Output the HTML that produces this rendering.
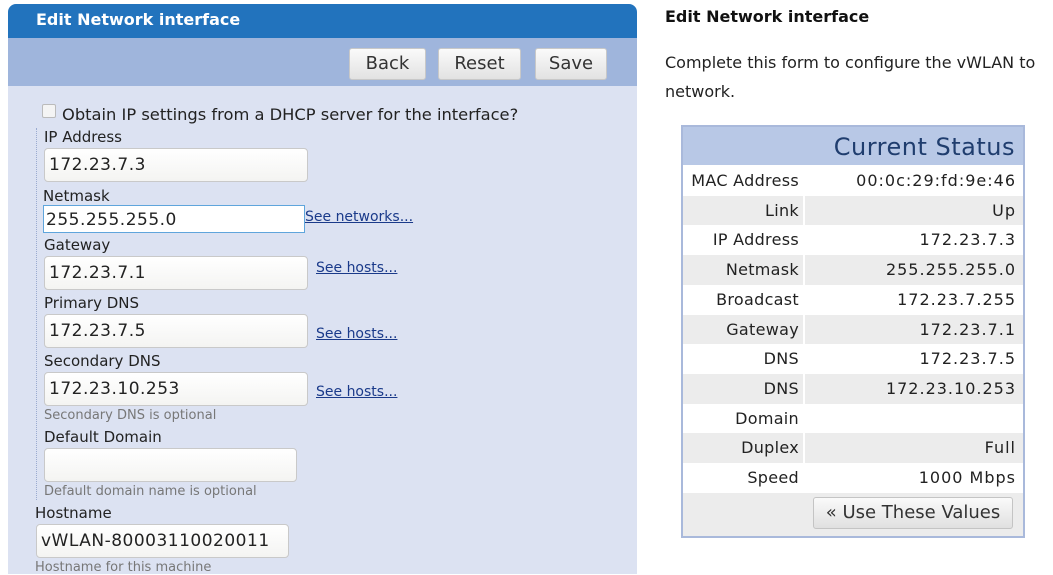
<!DOCTYPE html>
<html><head><meta charset="utf-8"><style>
*{box-sizing:border-box}
body{margin:0;width:1053px;height:574px;overflow:hidden;background:#fff;font-family:"DejaVu Sans","Liberation Sans",sans-serif;color:#222;position:relative}
.a{position:absolute;white-space:nowrap}
#hd{left:8px;top:4px;width:629px;height:34px;background:#2273bd;border-radius:8px 8px 0 0;color:#fff;font-weight:bold;font-size:16px;padding:6px 0 0 28px}
#tb{left:8px;top:38px;width:629px;height:48px;background:#9fb5dc}
#bd{left:8px;top:86px;width:629px;height:488px;background:#dce2f2}
.btn{position:absolute;top:48px;height:32px;background:linear-gradient(#fafafa,#e2e2e2);border:1px solid #c8c8c8;border-radius:3px;font-size:18px;color:#333;text-align:center;line-height:30px}
.lb{font-size:15px;color:#222}
.in{position:absolute;background:linear-gradient(#fff,#f4f4f2);border:1px solid #c9c9c9;border-radius:4px;font-size:17px;letter-spacing:0.5px;padding-left:4px;line-height:32px;color:#222}
.lk{font-size:14px;color:#1a3a8a;text-decoration:underline}
.ht{font-size:13px;color:#777}
#tbl{left:681px;top:125px;width:344px;height:413px;border:2px solid #a9b9db;background:#fff}
.r{position:absolute;left:0;width:340px;height:29.7px;font-size:16px;line-height:29.7px}
.r .k{position:absolute;left:0;width:118px;text-align:right;padding-right:2px;letter-spacing:0.3px}
.r .v{position:absolute;left:120px;width:220px;text-align:right;border-left:2px solid #fff;height:100%;padding-right:7px;letter-spacing:1px}
.g{background:#ececec}
</style></head><body>
<div class="a" id="hd">Edit Network interface</div>
<div class="a" id="tb"></div>
<div class="a" id="bd"></div>
<div class="btn" style="left:349px;width:77px">Back</div>
<div class="btn" style="left:438px;width:83px">Reset</div>
<div class="btn" style="left:535px;width:72px">Save</div>
<div class="a" style="left:36px;top:128px;height:372px;border-left:1px dotted #9aaad0"></div>
<div class="a" style="left:42px;top:104px;width:14px;height:14px;background:#f4f4f4;border:1px solid #bbb;border-radius:2px"></div>
<div class="a lb" style="left:62px;top:105px;font-size:16.3px">Obtain IP settings from a DHCP server for the interface?</div>
<div class="a lb" style="left:44px;top:128px">IP Address</div>
<div class="in" style="left:44px;top:148px;width:264px;height:34px">172.23.7.3</div>
<div class="a lb" style="left:43px;top:187px">Netmask</div>
<div class="in" style="left:43px;top:205px;width:262px;height:28px;background:#fff;border:1px solid #5fa5dc;border-radius:0;line-height:28px;padding-left:2px">255.255.255.0</div>
<div class="a lk" style="left:305px;top:209px">See networks...</div>
<div class="a lb" style="left:44px;top:236px">Gateway</div>
<div class="in" style="left:44px;top:256px;width:264px;height:34px">172.23.7.1</div>
<div class="a lk" style="left:316px;top:260px">See hosts...</div>
<div class="a lb" style="left:44px;top:294px">Primary DNS</div>
<div class="in" style="left:44px;top:314px;width:264px;height:34px">172.23.7.5</div>
<div class="a lk" style="left:316px;top:326px">See hosts...</div>
<div class="a lb" style="left:44px;top:352px">Secondary DNS</div>
<div class="in" style="left:44px;top:372px;width:264px;height:34px">172.23.10.253</div>
<div class="a lk" style="left:316px;top:384px">See hosts...</div>
<div class="a ht" style="left:44px;top:408px">Secondary DNS is optional</div>
<div class="a lb" style="left:44px;top:428px">Default Domain</div>
<div class="in" style="left:44px;top:448px;width:253px;height:34px"></div>
<div class="a ht" style="left:44px;top:484px">Default domain name is optional</div>
<div class="a lb" style="left:35px;top:504px">Hostname</div>
<div class="in" style="left:36px;top:524px;width:253px;height:34px">vWLAN-80003110020011</div>
<div class="a ht" style="left:35px;top:560px">Hostname for this machine</div>

<div class="a" style="left:665px;top:7px;font-size:16px;font-weight:bold;color:#111">Edit Network interface</div>
<div class="a" style="left:665px;top:48px;font-size:16px;line-height:29px;color:#222">Complete this form to configure the vWLAN to<br>network.</div>
<div class="a" id="tbl">
<div class="r" style="top:0;height:38px;background:#b8c8e6;line-height:40px"><span style="position:absolute;right:8px;font-size:24px;color:#1f3d6e;letter-spacing:0.5px">Current Status</span></div>
<div class="r" style="top:39px"><span class="k">MAC Address</span><span class="v">00:0c:29:fd:9e:46</span></div>
<div class="r g" style="top:68.7px"><span class="k">Link</span><span class="v">Up</span></div>
<div class="r" style="top:98.4px"><span class="k">IP Address</span><span class="v">172.23.7.3</span></div>
<div class="r g" style="top:128.1px"><span class="k">Netmask</span><span class="v">255.255.255.0</span></div>
<div class="r" style="top:157.8px"><span class="k">Broadcast</span><span class="v">172.23.7.255</span></div>
<div class="r g" style="top:187.5px"><span class="k">Gateway</span><span class="v">172.23.7.1</span></div>
<div class="r" style="top:217.2px"><span class="k">DNS</span><span class="v">172.23.7.5</span></div>
<div class="r g" style="top:246.9px"><span class="k">DNS</span><span class="v">172.23.10.253</span></div>
<div class="r" style="top:276.6px"><span class="k">Domain</span><span class="v"></span></div>
<div class="r g" style="top:306.3px"><span class="k">Duplex</span><span class="v">Full</span></div>
<div class="r" style="top:336px"><span class="k">Speed</span><span class="v">1000 Mbps</span></div>
<div class="r g" style="top:365.7px;height:43.3px"></div>
<div style="position:absolute;left:130px;top:370px;width:200px;height:32px;background:linear-gradient(#fafafa,#e0e0e0);border:1px solid #c4c4c4;border-radius:3px;font-size:18px;text-align:center;line-height:30px;color:#333">« Use These Values</div>
</div>
</body></html>
